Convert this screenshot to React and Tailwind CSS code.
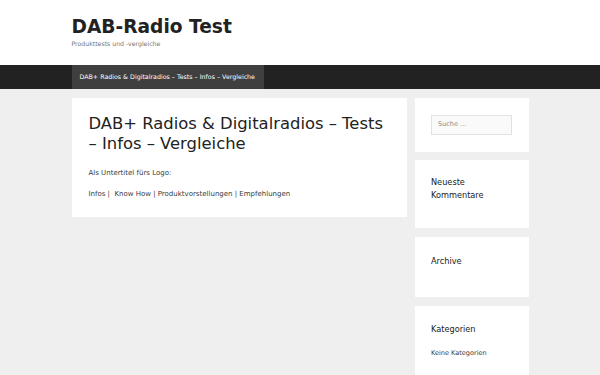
export default function App() {
  const font = { fontFamily: '"DejaVu Sans", "Noto Sans", sans-serif' };
  return (
    <div style={font} className="min-h-[375px] bg-[#efefef] text-[#222222]">
      <header className="bg-white">
        <div className="mx-auto w-[457px] pt-[16px] pb-[17px]">
          <div className="text-[18.6px] font-bold leading-[22px] text-[#222222]">DAB-Radio Test</div>
          <div className="mt-[1px] text-[6.2px] leading-[9px] text-[#757575]">Produkttests und -vergleiche</div>
        </div>
      </header>
      <nav className="bg-[#222222]">
        <div className="mx-auto flex h-[24px] w-[457px]">
          <div className="flex items-center bg-[#3f3f3f] pl-[8px] pr-[9px] text-[6.3px] text-white">
            DAB+ Radios &amp; Digitalradios – Tests – Infos – Vergleiche
          </div>
        </div>
      </nav>
      <div className="mx-auto flex w-[457px] items-start gap-[8px] pt-[9px]">
        <main className="w-[335px] bg-white p-[17px] pt-[16px]">
          <h1 className="text-[16.4px] font-normal leading-[19.7px] text-[#222222]">
            DAB+ Radios &amp; Digitalradios – Tests – Infos – Vergleiche
          </h1>
          <p className="mt-[15px] text-[7px] leading-[10.5px] text-[#3a3a3a]">Als Untertitel fürs Logo:</p>
          <p className="mt-[10.5px] text-[7px] leading-[10.5px] text-[#3a3a3a]">
            Infos |&nbsp; Know How | Produktvorstellungen | Empfehlungen
          </p>
        </main>
        <aside className="flex w-[114px] flex-col gap-[8px]">
          <div className="bg-white px-[16.5px] py-[17px]">
            <div className="flex h-[19.5px] w-full items-center border border-[#e2e2e2] bg-[#fafafa] px-[6px] text-[6.5px] text-[#8a8a8a]">
              Suche …
            </div>
          </div>
          <div className="bg-white px-[16.5px] pt-[16.5px] pb-[16px]">
            <h2 className="mb-[10.5px] text-[8.2px] font-normal leading-[12.6px] text-[#222222]">
              Neueste Kommentare
            </h2>
          </div>
          <div className="mt-[1px] bg-white px-[16.5px] pt-[18.5px] pb-[16.5px]">
            <h2 className="mb-[12.3px] text-[8.2px] font-normal leading-[12.6px] text-[#222222]">Archive</h2>
          </div>
          <div className="mt-[1px] bg-white px-[16.5px] pt-[17px] pb-[20px]">
            <h2 className="mb-[14px] text-[8.2px] font-normal leading-[12.6px] text-[#222222]">Kategorien</h2>
            <ul>
              <li className="text-[6.56px] leading-[9.84px] text-[#3a3a3a]">Keine Kategorien</li>
            </ul>
          </div>
        </aside>
      </div>
    </div>
  );
}
